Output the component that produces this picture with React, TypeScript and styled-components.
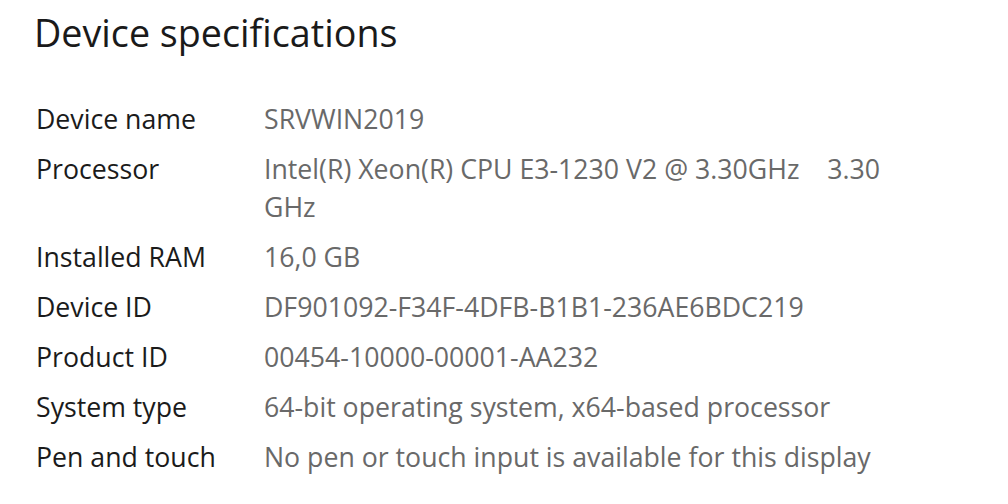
import React from "react";
import styled, { createGlobalStyle } from "styled-components";

const Global = createGlobalStyle`
  html, body { margin: 0; padding: 0; background: #ffffff; }
  body { font-family: "Open Sans", "Noto Sans", sans-serif; -webkit-font-smoothing: antialiased; }
`;

const Page = styled.div`
  width: 1008px;
  height: 504px;
  box-sizing: border-box;
  padding: 7px 0 0 34px;
  background: #ffffff;
  overflow: hidden;
`;

const Title = styled.h1`
  margin: 0 0 41px 0;
  font-weight: 400;
  font-size: 37.7px;
  line-height: 52px;
  color: #1a1a1a;
`;

const SpecGrid = styled.dl`
  margin: 0;
  display: grid;
  grid-template-columns: 230px 640px;
  row-gap: 12px;
  font-size: 26.7px;
  line-height: 38px;
`;

const Label = styled.dt`
  margin: 0 0 0 2px;
  color: #1b1b1b;
`;

const Value = styled.dd`
  margin: 0;
  color: #696969;
  white-space: pre-wrap;
`;

const specs: [string, string][] = [
  ["Device name", "SRVWIN2019"],
  ["Processor", "Intel(R) Xeon(R) CPU E3-1230 V2 @ 3.30GHz    3.30 GHz"],
  ["Installed RAM", "16,0 GB"],
  ["Device ID", "DF901092-F34F-4DFB-B1B1-236AE6BDC219"],
  ["Product ID", "00454-10000-00001-AA232"],
  ["System type", "64-bit operating system, x64-based processor"],
  ["Pen and touch", "No pen or touch input is available for this display"],
];

export default function App() {
  return (
    <>
      <Global />
      <Page>
        <Title>Device specifications</Title>
        <SpecGrid>
          {specs.map(([k, v]) => (
            <React.Fragment key={k}>
              <Label>{k}</Label>
              <Value>{v}</Value>
            </React.Fragment>
          ))}
        </SpecGrid>
      </Page>
    </>
  );
}
